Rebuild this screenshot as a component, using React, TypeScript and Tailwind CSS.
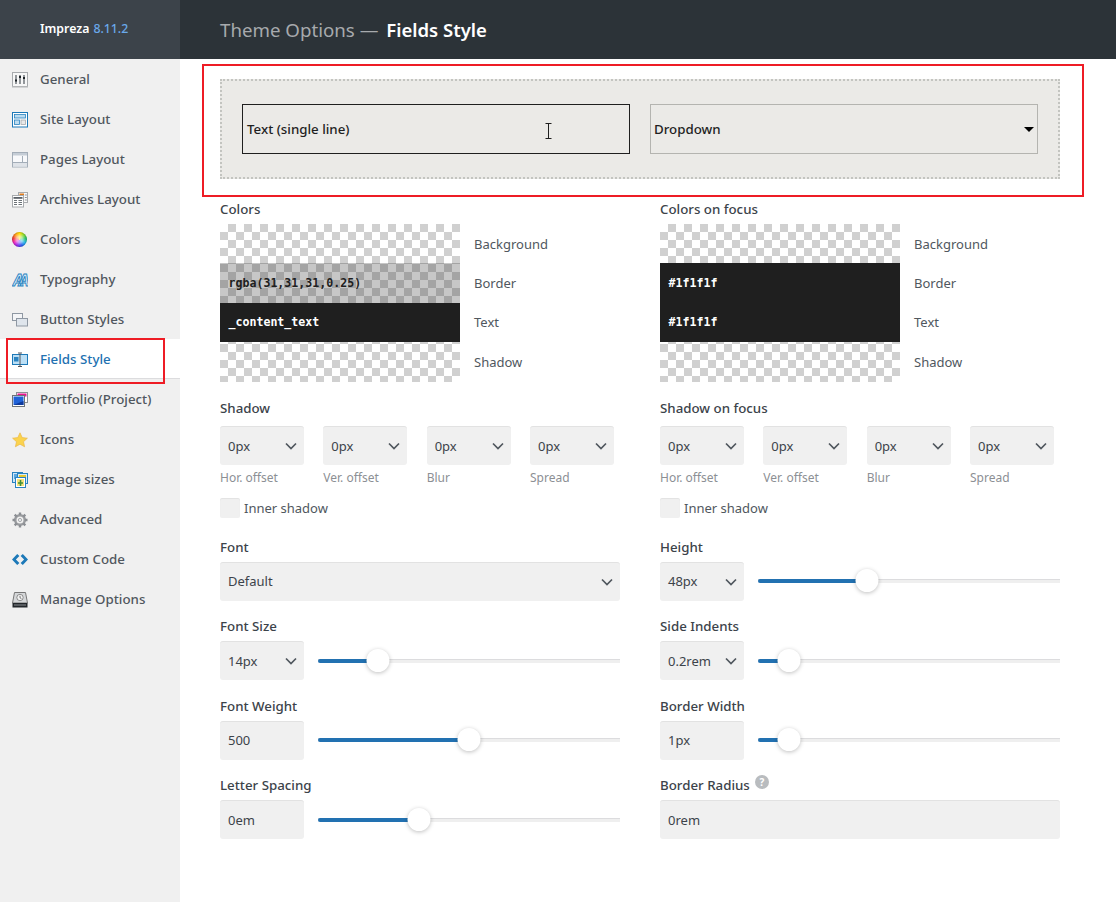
import type { ReactNode } from "react";

const ChevronDown = () => (
  <svg width="12" height="8" viewBox="0 0 12 8" fill="none" className="shrink-0">
    <path d="M1 1.5 6 6.5 11 1.5" stroke="#50575e" strokeWidth="1.7" />
  </svg>
);

const GeneralIcon = () => (
  <svg width="16" height="16" viewBox="0 0 16 16">
    <rect x="0.5" y="0.5" width="15" height="14" fill="#f7f7f7" stroke="#a7aaad" />
    <rect x="0" y="14" width="16" height="1.5" fill="#b4b6b8" />
    <path d="M4 3v9M8 3v9M12 3v9" stroke="#50575e" strokeWidth="1.2" />
    <path d="M3 8.5h2M7 5h2M11 6h2" stroke="#1d2327" strokeWidth="2" />
  </svg>
);

const SiteLayoutIcon = () => (
  <svg width="16" height="16" viewBox="0 0 16 16">
    <rect x="0.5" y="0.5" width="15" height="14.5" fill="#fff" stroke="#1d79b8" />
    <rect x="2.5" y="2.5" width="11" height="3.5" fill="#bcdcf0" stroke="#2a83c0" strokeWidth="0.8" />
    <rect x="2.5" y="8" width="5" height="4.5" fill="#bcdcf0" stroke="#2a83c0" strokeWidth="0.8" />
    <rect x="9" y="8" width="4.5" height="4.5" fill="#e8e8e8" stroke="#a7aaad" strokeWidth="0.8" />
  </svg>
);

const PagesLayoutIcon = () => (
  <svg width="16" height="16" viewBox="0 0 16 16">
    <rect x="0.5" y="0.5" width="15" height="14.5" fill="#f8f9fb" stroke="#a3adb8" />
    <rect x="1" y="1" width="14" height="2.5" fill="#c5cdd6" />
    <path d="M1 10.5h14M10.5 4v6.5" stroke="#a3adb8" />
    <rect x="1" y="11" width="14" height="3.5" fill="#dfe3e8" />
  </svg>
);

const ArchivesIcon = () => (
  <svg width="16" height="16" viewBox="0 0 16 16">
    <rect x="6.5" y="0.5" width="9" height="10" fill="#fafafa" stroke="#a7aaad" />
    <rect x="7.5" y="1.5" width="4.5" height="3" fill="#e07b1a" />
    <path d="M12.8 3h2M12.8 5.5h2M12.8 8h2" stroke="#8c8f94" />
    <rect x="0.5" y="3.5" width="11" height="11.5" fill="#fff" stroke="#a7aaad" />
    <rect x="1.5" y="5" width="9" height="1.8" fill="#5b6168" />
    <path d="M2 8.5h3M2 10.5h3M2 12.5h3M6.5 8.5h3.5M6.5 10.5h3.5M6.5 12.5h3.5" stroke="#6d7378" />
  </svg>
);

const ColorsIcon = () => (
  <div className="relative h-[15px] w-[15px] rounded-full bg-[conic-gradient(#ffe000,#8fdc2a,#26c46c,#22b6e8,#2a5cf0,#8b2af0,#ee22c0,#f03a3a,#ff9a1a,#ffe000)] shadow-[inset_0_0_0_1px_rgba(0,0,0,0.15)]">
    <div className="absolute inset-[3px] rounded-full bg-white/60 blur-[1px]" />
  </div>
);

const TypographyIcon = () => (
  <svg width="16" height="16" viewBox="0 0 16 16">
    <text x="0.5" y="14" fontSize="16" fontWeight="700" fontStyle="italic" letterSpacing="-6" fontFamily="Liberation Sans" fill="#d9eefb" stroke="#2a83c0" strokeWidth="0.9">AA</text>
  </svg>
);

const ButtonStylesIcon = () => (
  <svg width="16" height="16" viewBox="0 0 16 16">
    <rect x="0.5" y="1.5" width="10" height="7" fill="#f4f5f7" stroke="#8f98a3" />
    <rect x="4.5" y="6.5" width="11" height="7.5" fill="#dfe5ec" stroke="#8f98a3" />
  </svg>
);

const FieldsIcon = () => (
  <svg width="16" height="16" viewBox="0 0 16 16">
    <rect x="0.5" y="2.5" width="15" height="10" fill="#bcdff5" stroke="#1d79b8" />
    <rect x="2" y="5" width="4.5" height="4.5" fill="#2a83c0" />
    <path d="M8 1.5v12.5M6 1h4M6 14.5h4" stroke="#50575e" />
  </svg>
);

const PortfolioIcon = () => (
  <svg width="16" height="16" viewBox="0 0 16 16">
    <rect x="4.5" y="0.5" width="11" height="10" fill="#fff" stroke="#8c8f94" />
    <rect x="5.5" y="1.5" width="9" height="3" fill="#e8158f" />
    <rect x="0.5" y="3.5" width="12" height="11" fill="#fff" stroke="#6d7378" />
    <rect x="1.5" y="4.5" width="10" height="8.5" fill="#1f62d8" />
    <path d="M1.5 13 11.5 9v4z" fill="#0e3a9c" />
  </svg>
);

const StarIcon = () => (
  <svg width="16" height="16" viewBox="0 0 16 16">
    <path d="M8 .8l2.2 4.8 5.2.6-3.9 3.5 1.1 5.1L8 12.2l-4.6 2.6 1.1-5.1L.6 6.2l5.2-.6z" fill="#fbd34d" stroke="#eab84a" strokeWidth="0.7" />
  </svg>
);

const ImageSizesIcon = () => (
  <svg width="16" height="16" viewBox="0 0 16 16">
    <rect x="0.5" y="0.5" width="10" height="10" fill="#cfe6f7" stroke="#2a83c0" />
    <rect x="2" y="2" width="7" height="5" fill="#5aa7e0" />
    <rect x="5.5" y="1.5" width="10" height="10" fill="#d8ecf8" stroke="#2a83c0" />
    <rect x="7" y="3" width="7" height="3" fill="#e6c832" />
    <rect x="3.5" y="5.5" width="10" height="10" fill="#fff" stroke="#2a83c0" />
    <rect x="5" y="7" width="7" height="7" fill="#f5e27a" />
    <path d="M8.5 8v6M6 11h5" stroke="#3f8f3a" strokeWidth="1.6" />
  </svg>
);

const GearIcon = () => (
  <svg width="16" height="16" viewBox="0 0 16 16">
    <circle cx="8" cy="8" r="4.8" fill="none" stroke="#9a9c9f" strokeWidth="2.6" />
    <circle cx="8" cy="8" r="1.6" fill="none" stroke="#a7aaad" />
    <path d="M8 .5v2.6M8 12.9v2.6M.5 8h2.6M12.9 8h2.6M2.7 2.7l1.9 1.9M11.4 11.4l1.9 1.9M2.7 13.3l1.9-1.9M11.4 4.6l1.9-1.9" stroke="#8c8f94" strokeWidth="2.4" />
  </svg>
);

const CodeIcon = () => (
  <svg width="16" height="16" viewBox="0 0 16 16">
    <path d="M5.2 2 0 7.5 5.2 13 7.4 11 3.9 7.5 7.4 4z" fill="#1d79b8" />
    <path d="M10.8 2 16 7.5 10.8 13 8.6 11 12.1 7.5 8.6 4z" fill="#1d79b8" />
  </svg>
);

const ManageIcon = () => (
  <svg width="16" height="16" viewBox="0 0 16 16">
    <path d="M2.5 .5h11l2 10.5H.5z" fill="#d5d7d9" stroke="#777" />
    <circle cx="8" cy="5.5" r="3.2" fill="#f2f2f2" stroke="#777" strokeWidth="0.8" />
    <path d="M8 3.8v2l1.4.8" stroke="#555" strokeWidth="0.8" fill="none" />
    <rect x="0.5" y="11" width="15" height="4.5" fill="#23272b" />
    <rect x="2" y="12.5" width="12" height="1" fill="#8c8f94" />
  </svg>
);

const menu: { label: string; icon: ReactNode; active?: boolean }[] = [
  { label: "General", icon: <GeneralIcon /> },
  { label: "Site Layout", icon: <SiteLayoutIcon /> },
  { label: "Pages Layout", icon: <PagesLayoutIcon /> },
  { label: "Archives Layout", icon: <ArchivesIcon /> },
  { label: "Colors", icon: <ColorsIcon /> },
  { label: "Typography", icon: <TypographyIcon /> },
  { label: "Button Styles", icon: <ButtonStylesIcon /> },
  { label: "Fields Style", icon: <FieldsIcon />, active: true },
  { label: "Portfolio (Project)", icon: <PortfolioIcon /> },
  { label: "Icons", icon: <StarIcon /> },
  { label: "Image sizes", icon: <ImageSizesIcon /> },
  { label: "Advanced", icon: <GearIcon /> },
  { label: "Custom Code", icon: <CodeIcon /> },
  { label: "Manage Options", icon: <ManageIcon /> },
];

function Label({ children }: { children: ReactNode }) {
  return <div className="mb-[5px] h-5 text-[13.3px] leading-5 font-medium text-[#3c434a]">{children}</div>;
}

function Box({ value, chevron, className }: { value: string; chevron?: boolean; className: string }) {
  return (
    <div className={`flex h-[39px] shrink-0 items-center justify-between rounded-[3px] border-t border-[#e2e2e2] bg-[#f0f0f0] pr-[7px] pl-2 text-[13px] text-[#3c434a] ${className}`}>
      <span className="pt-[1px]">{value}</span>
      {chevron && <ChevronDown />}
    </div>
  );
}

function Slider({ fill, thumb }: { fill: string; thumb: string }) {
  return (
    <div className="relative ml-[14px] h-1 flex-1 self-center border-t border-[#dcdcde] bg-[#efefef]">
      <div className={`-mt-px h-1 rounded-l-[2px] bg-[#2271b1] ${fill}`} />
      <div className={`absolute top-[-11px] h-[23px] w-[23px] -translate-x-1/2 rounded-full bg-white shadow-[0_1px_4px_rgba(0,0,0,0.25)] ${thumb}`} />
    </div>
  );
}

function SliderField({ label, value, chevron, fill, thumb }: { label: string; value: string; chevron?: boolean; fill: string; thumb: string }) {
  return (
    <div className="mb-[15.5px]">
      <Label>{label}</Label>
      <div className="flex">
        <Box value={value} chevron={chevron} className="w-[84px]" />
        <Slider fill={fill} thumb={thumb} />
      </div>
    </div>
  );
}

function Swatch({ value, dark, faded }: { value?: string; dark?: boolean; faded?: boolean }) {
  return (
    <div className={`flex h-[39.25px] items-center pt-[1px] pl-[8.5px] font-['DejaVu_Sans_Mono'] text-[11.6px] font-bold ${dark ? "bg-[#1f1f1f] text-white" : ""} ${faded ? "bg-[#1f1f1f]/25 text-[#1f1f1f]" : ""}`}>
      {value}
    </div>
  );
}

function ColorsPanel({ label, border, text, borderDark }: { label: string; border: string; text: string; borderDark?: boolean }) {
  return (
    <div>
      <Label>{label}</Label>
      <div className="flex">
        <div className="w-60 bg-[conic-gradient(#d0d0d0_25%,#fff_0_50%,#d0d0d0_0_75%,#fff_0)] bg-[length:16px_16px]">
          <Swatch />
          <Swatch value={border} dark={borderDark} faded={!borderDark} />
          <Swatch value={text} dark />
          <Swatch />
        </div>
        <div className="mt-[0.5px] ml-[14px] text-[13px] text-[#50575e]">
          <div className="flex h-[39.25px] items-center pt-[1px]">Background</div>
          <div className="flex h-[39.25px] items-center pt-[1px]">Border</div>
          <div className="flex h-[39.25px] items-center pt-[1px]">Text</div>
          <div className="flex h-[39.25px] items-center pt-[1px]">Shadow</div>
        </div>
      </div>
    </div>
  );
}

function ShadowPanel({ label }: { label: string }) {
  const captions = ["Hor. offset", "Ver. offset", "Blur", "Spread"];
  return (
    <div className="mt-[16.5px]">
      <Label>{label}</Label>
      <div className="mt-[8px] flex w-[394px] justify-between">
        {captions.map((caption) => (
          <div key={caption} className="w-[84px]">
            <Box value="0px" chevron className="w-[84px]" />
            <div className="mt-[2.5px] h-5 text-[12px] leading-5 text-[#8c8f94]">{caption}</div>
          </div>
        ))}
      </div>
      <div className="mt-[10.5px] flex items-center">
        <div className="h-5 w-5 rounded-[2px] bg-[#f0f0f0] shadow-[inset_0_1px_1px_rgba(0,0,0,0.06)]" />
        <span className="ml-1 pt-[1px] text-[13px] text-[#50575e]">Inner shadow</span>
      </div>
    </div>
  );
}

export default function App() {
  return (
    <div className="relative flex h-[902px] w-[1116px] overflow-hidden bg-white font-['Noto_Sans',sans-serif]">
      <aside className="w-[180px] shrink-0 bg-[#f0f0f0]">
        <div className="flex h-[59px] items-center bg-[#3c434a] pl-10 text-[12.3px] font-semibold text-white">
          Impreza <span className="ml-1 font-medium text-[#6aa9ea]">8.11.2</span>
        </div>
        {menu.map((item) => (
          <div
            key={item.label}
            className={`flex h-10 items-center text-[13.3px] font-medium ${item.active ? "border-b border-[#dcdcde] bg-white pt-[2px] text-[#2271b1]" : "pt-[1px] text-[#50575e]"}`}
          >
            <div className="flex w-10 justify-center pr-[1px]">{item.icon}</div>
            {item.label}
          </div>
        ))}
      </aside>

      <main className="flex-1">
        <header className="flex h-[59px] items-center bg-[#2c3338] pt-[1px] pl-10 text-[18.7px] text-[#a7aaad]">
          Theme Options —&nbsp;<span className="ml-[3px] text-[18.5px] font-semibold text-white">Fields Style</span>
        </header>

        <div className="ml-10 w-[840px]">
          <div className="mt-5 flex h-[100px] justify-between border-2 border-dotted border-[#c3c4c0] bg-[#ebeae7] px-5 pt-[23px]">
            <div className="flex h-[50px] w-[388px] items-center border border-[#1f1f1f] pt-[1px] pl-1 text-[13.3px] font-medium text-[#1f1f1f]">
              Text (single line)
            </div>
            <div className="flex h-[50px] w-[388px] items-center justify-between border border-[#b4b4b0] pt-[1px] pr-[3px] pl-[3px] text-[13.3px] font-medium text-[#1f1f1f]">
              Dropdown
              <div className="h-0 w-0 border-x-[5px] border-t-[5.5px] border-x-transparent border-t-black" />
            </div>
          </div>

          <div className="mt-5 grid grid-cols-2 gap-x-10">
            <div>
              <ColorsPanel label="Colors" border="rgba(31,31,31,0.25)" text="_content_text" />
              <ShadowPanel label="Shadow" />
            </div>
            <div>
              <ColorsPanel label="Colors on focus" border="#1f1f1f" text="#1f1f1f" borderDark />
              <ShadowPanel label="Shadow on focus" />
            </div>
          </div>

          <div className="mt-[18px] grid grid-cols-2 gap-x-10">
            <div>
              <div className="mb-[15.5px]">
                <Label>Font</Label>
                <Box value="Default" chevron className="w-full" />
              </div>
              <SliderField label="Font Size" value="14px" chevron fill="w-[60px]" thumb="left-[60px]" />
              <SliderField label="Font Weight" value="500" fill="w-[151px]" thumb="left-[151px]" />
              <SliderField label="Letter Spacing" value="0em" fill="w-[101px]" thumb="left-[101px]" />
            </div>
            <div>
              <SliderField label="Height" value="48px" chevron fill="w-[109px]" thumb="left-[109px]" />
              <SliderField label="Side Indents" value="0.2rem" chevron fill="w-[31px]" thumb="left-[31px]" />
              <SliderField label="Border Width" value="1px" fill="w-[31px]" thumb="left-[31px]" />
              <div>
                <Label>
                  <span className="inline-flex items-center">
                    Border Radius
                    <span className="mb-[6px] ml-[5px] flex h-[14px] w-[14px] items-center justify-center rounded-full bg-[#b9bcbf] text-[10px] font-bold text-white">?</span>
                  </span>
                </Label>
                <Box value="0rem" className="w-full" />
              </div>
            </div>
          </div>
        </div>
      </main>

      {/* annotation boxes and mouse cursor lying over the page */}
      <div className="absolute top-[338px] left-[6px] h-[46px] w-[159px] border-2 border-[#ee1c25]" />
      <div className="absolute top-[64px] left-[202px] h-[133px] w-[882px] border-2 border-[#ee1c25]" />
      <svg className="absolute top-[123px] left-[544px]" width="9" height="17" viewBox="0 0 9 17" fill="none">
        <path d="M1.5 .5h6M1.5 15.5h6M4.5 .5v15" stroke="#1f1f1f" />
      </svg>
    </div>
  );
}
